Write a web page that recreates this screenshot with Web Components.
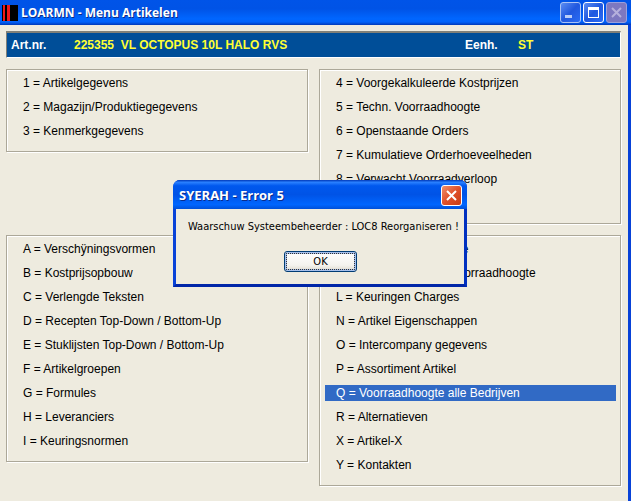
<!DOCTYPE html>
<html lang="nl">
<head>
  <meta charset="utf-8">
  <meta name="viewport" content="width=device-width, initial-scale=1">
  <title>LOARMN - Menu Artikelen</title>
  <style>
    html, body {
      height: 100%;
    }

    body {
      margin: 0;
      background: #eeebdf;
      font: 12px/16px "Liberation Sans", Arial, sans-serif;
      color: #000;
    }
  </style>
</head>
<body>
  <app-window caption="LOARMN - Menu Artikelen">
    <article-bar number="225355" name="VL OCTOPUS 10L HALO RVS" unit="ST"></article-bar>
    <menu-columns>
      <menu-group>
        <menu-option>1 = Artikelgegevens</menu-option>
        <menu-option>2 = Magazijn/Produktiegegevens</menu-option>
        <menu-option>3 = Kenmerkgegevens</menu-option>
      </menu-group>
      <menu-group>
        <menu-option>4 = Voorgekalkuleerde Kostprijzen</menu-option>
        <menu-option>5 = Techn. Voorraadhoogte</menu-option>
        <menu-option>6 = Openstaande Orders</menu-option>
        <menu-option>7 = Kumulatieve Orderhoeveelheden</menu-option>
        <menu-option>8 = Verwacht Voorraadverloop</menu-option>
        <menu-option></menu-option>
      </menu-group>
      <menu-group>
        <menu-option>A = Verschÿningsvormen</menu-option>
        <menu-option>B = Kostprijsopbouw</menu-option>
        <menu-option>C = Verlengde Teksten</menu-option>
        <menu-option>D = Recepten Top-Down / Bottom-Up</menu-option>
        <menu-option>E = Stuklijsten Top-Down / Bottom-Up</menu-option>
        <menu-option>F = Artikelgroepen</menu-option>
        <menu-option>G = Formules</menu-option>
        <menu-option>H = Leveranciers</menu-option>
        <menu-option>I = Keuringsnormen</menu-option>
      </menu-group>
      <menu-group>
        <menu-option>J = Leveranciers Historie</menu-option>
        <menu-option>K = Overzicht Techn. Voorraadhoogte</menu-option>
        <menu-option>L = Keuringen Charges</menu-option>
        <menu-option>N = Artikel Eigenschappen</menu-option>
        <menu-option>O = Intercompany gegevens</menu-option>
        <menu-option>P = Assortiment Artikel</menu-option>
        <menu-option selected>Q = Voorraadhoogte alle Bedrijven</menu-option>
        <menu-option>R = Alternatieven</menu-option>
        <menu-option>X = Artikel-X</menu-option>
        <menu-option>Y = Kontakten</menu-option>
      </menu-group>
    </menu-columns>
    <error-dialog slot="dialog" caption="SYERAH - Error 5">Waarschuw Systeembeheerder : LOC8 Reorganiseren !</error-dialog>
  </app-window>

  <script>
    class AppWindow extends HTMLElement {
      connectedCallback() {
        this.attachShadow({ mode: 'open' });
        this.shadowRoot.innerHTML = `
          <style>
            :host {
              display: flex;
              flex-direction: column;
              position: relative;
              min-height: 100%;
            }

            header {
              display: flex;
              align-items: center;
              height: 25px;
              padding: 0 4px 0 2px;
              box-sizing: border-box;
              background: linear-gradient(#0054e8, #0053e6 35%, #0066ff 75%, #0062fa 88%, #0038b8);
            }

            h1 {
              flex: 1;
              margin: 0 0 0 3px;
              font: bold 12px/20px "Open Sans", "Noto Sans", sans-serif;
              color: #fff;
              text-shadow: 1px 1px #0a2c8c;
            }

            .logo {
              display: block;
              width: 16px;
              height: 16px;
            }

            nav {
              display: flex;
              gap: 2px;
              margin-bottom: 1px;
            }

            button {
              width: 21px;
              height: 21px;
              padding: 0;
              border: 1px solid #fff;
              border-radius: 3px;
              background: linear-gradient(135deg, #5b8cf2, #2058df 50%, #2a6cf5);
            }

            button svg {
              display: block;
            }

            .min {
              border-color: #a9c2f5;
            }

            button:disabled {
              border-color: #9aa0dc;
              background: #7d78c0;
            }

            main {
              flex: 1;
              padding: 6px 7px 14px 6px;
              border-right: 3px solid #0842d8;
            }
          </style>
          <header>
            <svg class="logo" viewBox="0 0 16 16" shape-rendering="crispEdges" aria-hidden="true">
              <path fill="#000" d="M0 0h16v16H0z"/>
              <path fill="#f01818" d="M1 0h2v16H1zM5 0h3v16H5z"/>
            </svg>
            <h1></h1>
            <nav>
              <button class="min" aria-label="Minimaliseren"><svg width="19" height="19"><path fill="#b9cdf8" d="M4 12h7v3H4z"/></svg></button>
              <button aria-label="Maximaliseren"><svg width="19" height="19"><path fill="#fff" fill-rule="evenodd" d="M4 4h11v11H4zM5 7v7h9V7z"/></svg></button>
              <button disabled aria-label="Sluiten"><svg width="19" height="19"><path stroke="#b5b0dc" stroke-width="2" d="M5 5l9 9M14 5l-9 9"/></svg></button>
            </nav>
          </header>
          <main><slot></slot></main>
          <slot name="dialog"></slot>
        `;
        this.shadowRoot.querySelector('h1').textContent = this.getAttribute('caption');
      }
    }

    class ArticleBar extends HTMLElement {
      connectedCallback() {
        this.attachShadow({ mode: 'open' });
        this.shadowRoot.innerHTML = `
          <style>
            :host {
              display: grid;
              grid-template-columns: 63px 1fr 53px 102px;
              align-items: center;
              height: 27px;
              padding-left: 4px;
              box-sizing: border-box;
              border: 1px solid #808078;
              border-width: 2px 1px 1px 1px;
              border-right-color: #fff;
              border-bottom-color: #fff;
              background: #004e98;
              font-weight: bold;
              color: #fff;
            }

            .value {
              color: #ff3;
              white-space: pre;
            }
          </style>
          <span>Art.nr.</span>
          <span class="value">${this.getAttribute('number')}  ${this.getAttribute('name')}</span>
          <span>Eenh.</span>
          <span class="value">${this.getAttribute('unit')}</span>
        `;
      }
    }

    class MenuColumns extends HTMLElement {
      connectedCallback() {
        this.attachShadow({ mode: 'open' });
        this.shadowRoot.innerHTML = `
          <style>
            :host {
              display: grid;
              grid-template-columns: 1fr 1fr;
              align-items: start;
              gap: 11px;
              margin-top: 11px;
            }
          </style>
          <slot></slot>
        `;
      }
    }

    class MenuGroup extends HTMLElement {
      connectedCallback() {
        this.attachShadow({ mode: 'open' });
        this.shadowRoot.innerHTML = `
          <style>
            :host {
              display: flex;
              flex-direction: column;
              gap: 8px;
              padding: 5px 4px 12px 5px;
              border: 1px solid #aca899;
              box-shadow: 1px 1px #fff, inset 1px 1px #fff;
            }
          </style>
          <slot></slot>
        `;
      }
    }

    class MenuOption extends HTMLElement {
      connectedCallback() {
        this.attachShadow({ mode: 'open' });
        this.shadowRoot.innerHTML = `
          <style>
            :host {
              display: block;
              height: 16px;
            }

            button {
              display: block;
              width: 100%;
              height: 16px;
              padding: 0 11px;
              border: 0;
              background: none;
              font: inherit;
              color: inherit;
              text-align: left;
              white-space: nowrap;
            }

            :host([selected]) button {
              background: #316ac5;
              color: #fff;
            }
          </style>
          ${this.textContent ? '<button><slot></slot></button>' : ''}
        `;
      }
    }

    class ErrorDialog extends HTMLElement {
      connectedCallback() {
        this.attachShadow({ mode: 'open' });
        this.setAttribute('role', 'alertdialog');
        this.setAttribute('aria-label', this.getAttribute('caption'));
        this.shadowRoot.innerHTML = `
          <style>
            :host {
              position: absolute;
              top: 180px;
              left: 173px;
              min-width: 294px;
              box-sizing: border-box;
              border: 3px solid #0842d8;
              border-top: 0;
              border-bottom-color: #0026a8;
              border-right-color: #0030c0;
              border-radius: 7px 7px 0 0;
              background: #0842d8;
              font: 11px/16px "DejaVu Sans Condensed", Tahoma, sans-serif;
            }

            header {
              display: flex;
              align-items: center;
              height: 29px;
              margin: 0 -3px;
              padding: 1px 5px 0 6px;
              box-sizing: border-box;
              border-radius: 7px 7px 0 0;
              background: linear-gradient(#0038b8, #2a80ff 8%, #0058ee 20%, #0053e6 50%, #0066ff 85%, #0050d8);
            }

            h2 {
              flex: 1;
              margin: 0;
              font: bold 13px/20px "Open Sans", "Noto Sans", sans-serif;
              color: #fff;
              text-shadow: 1px 1px #0a2c8c;
            }

            .close {
              width: 21px;
              height: 21px;
              padding: 0;
              border: 1px solid #fff;
              border-radius: 3px;
              background: linear-gradient(135deg, #f0906c, #e0502a 50%, #c83c14);
            }

            .close svg {
              display: block;
            }

            section {
              display: flex;
              flex-direction: column;
              align-items: center;
              gap: 16px;
              padding: 10px 4px 12px 12px;
              background: #eeebdf;
            }

            p {
              align-self: start;
              margin: 0;
              white-space: nowrap;
            }

            .ok {
              width: 73px;
              height: 21px;
              margin-right: 7px;
              padding: 0;
              border: 1px solid #003c74;
              border-radius: 3px;
              background: linear-gradient(#fff, #f4f3ee 70%, #dcd8cc);
              box-shadow: inset 0 0 0 2px #a6c0ec;
              outline: 1px dotted #333;
              outline-offset: -3px;
              font: inherit;
            }
          </style>
          <header>
            <h2></h2>
            <button class="close" aria-label="Sluiten"><svg width="19" height="19"><path stroke="#fff" stroke-width="2" d="M5 5l9 9M14 5l-9 9"/></svg></button>
          </header>
          <section>
            <p><slot></slot></p>
            <button class="ok">OK</button>
          </section>
        `;
        this.shadowRoot.querySelector('h2').textContent = this.getAttribute('caption');
      }
    }

    customElements.define('app-window', AppWindow);
    customElements.define('article-bar', ArticleBar);
    customElements.define('menu-columns', MenuColumns);
    customElements.define('menu-group', MenuGroup);
    customElements.define('menu-option', MenuOption);
    customElements.define('error-dialog', ErrorDialog);
  </script>
</body>
</html>
